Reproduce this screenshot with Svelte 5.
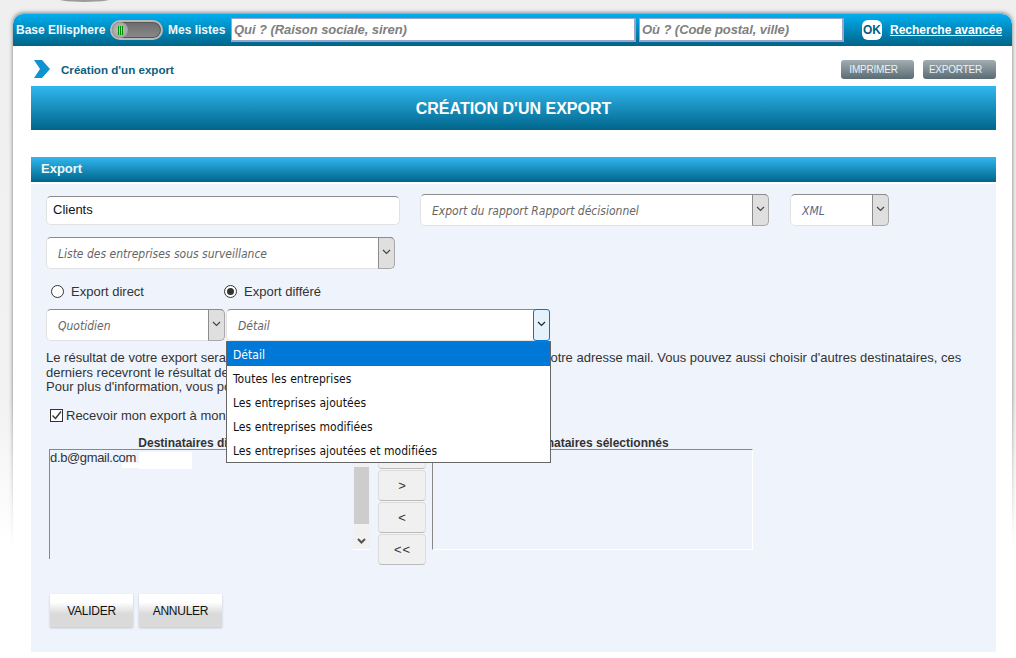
<script>
  const options = ['Détail', 'Toutes les entreprises', 'Les entreprises ajoutées', 'Les entreprises modifiées', 'Les entreprises ajoutées et modifiées'];
</script>

<div class="bg">
  <div class="arc"></div>
  <div class="shade"><div class="shade-box"></div></div>
  <div class="page">
    <header class="top">
      <span class="tl base">Base Ellisphere</span>
      <span class="toggle"><span class="knob"><i></i><i></i><i></i></span></span>
      <span class="tl mes">Mes listes</span>
      <div class="search qui">Qui ? (Raison sociale, siren)</div>
      <div class="search ou">Où ? (Code postal, ville)</div>
      <span class="ok">OK</span>
      <a class="adv" href="#top">Recherche avancée</a>
    </header>

    <div class="content">
      <div class="crumbs">
        <svg class="chev" width="18" height="18" viewBox="0 0 18 18"><path d="M1 0H9L17 9L9 18H1L7 9Z" fill="#0f93d0"/></svg>
        <span class="crumb">Création d'un export</span>
        <span class="spacer"></span>
        <span class="gbtn">IMPRIMER</span>
        <span class="gbtn">EXPORTER</span>
      </div>
      <h1 class="title">CRÉATION D'UN EXPORT</h1>
      <h2 class="section">Export</h2>
      <div class="panel">
        <div class="row r1">
          <div class="input">Clients</div>
          <div class="sel w349"><span class="val">Export du rapport Rapport décisionnel</span><span class="arrow"><svg width="9" height="6" viewBox="0 0 9 6"><path d="M1 1L4.500 4.500L8 1" fill="none" stroke="#444" stroke-width="1.200"/></svg></span></div>
          <div class="sel w99"><span class="val xml">XML</span><span class="arrow"><svg width="9" height="6" viewBox="0 0 9 6"><path d="M1 1L4.500 4.500L8 1" fill="none" stroke="#444" stroke-width="1.200"/></svg></span></div>
        </div>
        <div class="row r2">
          <div class="sel w349"><span class="val">Liste des entreprises sous surveillance</span><span class="arrow"><svg width="9" height="6" viewBox="0 0 9 6"><path d="M1 1L4.500 4.500L8 1" fill="none" stroke="#444" stroke-width="1.200"/></svg></span></div>
        </div>
        <div class="row r3">
          <span class="radio"></span><span class="rlabel first">Export direct</span>
          <span class="radio on"></span><span class="rlabel">Export différé</span>
        </div>
        <div class="row r4">
          <div class="sel w179"><span class="val">Quotidien</span><span class="arrow"><svg width="9" height="6" viewBox="0 0 9 6"><path d="M1 1L4.500 4.500L8 1" fill="none" stroke="#444" stroke-width="1.200"/></svg></span></div>
          <div class="sel w324 open">
            <span class="val">Détail</span><span class="arrow"><svg width="9" height="6" viewBox="0 0 9 6"><path d="M1 1L4.500 4.500L8 1" fill="none" stroke="#222" stroke-width="1.200"/></svg></span>
            <ul class="menu">
              {#each options as o, i}
                <li class:active={i === 0}>{o}</li>
              {/each}
            </ul>
          </div>
        </div>
        <p class="info">Le résultat de votre export sera envoyé selon la fréquence choisie automatiquement à votre adresse mail. Vous pouvez aussi choisir d'autres destinataires, ces<br>derniers recevront le résultat de votre export par mail à chaque nouvelle génération.<br>Pour plus d'information, vous pouvez consulter notre aide en ligne.</p>
        <div class="check">
          <span class="cb"><svg width="13" height="13" viewBox="0 0 13 13"><path d="M2.500 6.500L5.500 9.500L11 2.500" fill="none" stroke="#333" stroke-width="1.400"/></svg></span>
          <span>Recevoir mon export à mon adresse mail</span>
        </div>
        <div class="transfer">
          <div class="col">
            <div class="head lefthead">Destinataires disponibles</div>
            <div class="list left">
              <div class="items">
                <div class="mail"><span class="mask m1"></span><span class="mask m2"></span><span class="addr">d.b@gmail.com</span></div>
              </div>
              <div class="scroll">
                <span class="thumb"></span>
                <svg class="down" width="9" height="6" viewBox="0 0 9 6"><path d="M1 1L4.500 4.500L8 1" fill="none" stroke="#555" stroke-width="2"/></svg>
              </div>
            </div>
          </div>
          <div class="moves">
            <span class="mv">&gt;&gt;</span>
            <span class="mv">&gt;</span>
            <span class="mv">&lt;</span>
            <span class="mv">&lt;&lt;</span>
          </div>
          <div class="col">
            <div class="head">Destinataires sélectionnés</div>
            <div class="list right"></div>
          </div>
        </div>
        <div class="actions">
          <span class="act">VALIDER</span>
          <span class="act">ANNULER</span>
        </div>
      </div>
    </div>
  </div>
</div>

<style>
  :global(body) { margin: 0; background: #fff; }
  * { box-sizing: border-box; }
  .bg {
    position: relative;
    height: 658px;
    overflow: hidden;
    padding: 14px 4px 0 13px;
    background: linear-gradient(#efefef 0, #f2f2f2 400px, #fff 540px);
    font-family: "Liberation Sans", Arial, sans-serif;
  }
  .arc {
    position: absolute;
    top: -9px; left: 53px;
    width: 63px; height: 11px;
    border-radius: 50%;
    background: #9f9a9c;
  }
  .shade {
    position: absolute;
    top: 6px; left: 5px;
    width: 1015px; height: 560px;
    padding: 8px;
    -webkit-mask-image: linear-gradient(#000 70%, transparent 97%);
    mask-image: linear-gradient(#000 70%, transparent 97%);
  }
  .shade-box {
    height: 100%;
    border-radius: 10px 10px 0 0;
    box-shadow: 0 -1px 4px rgba(0,0,0,.5);
  }
  .page {
    position: relative;
    height: 644px;
    background: #fff;
    border-radius: 10px 10px 0 0;
  }
  .top {
    display: flex;
    align-items: center;
    height: 32px;
    border-radius: 10px 10px 0 0;
    background: linear-gradient(#00aeef, #006488);
    color: #fff;
    padding-left: 4px;
  }
  .tl { font-size: 12px; font-weight: bold; color: #f0f8fc; white-space: nowrap; }
  .base { width: 93px; margin-left: -1px; margin-right: 1px; }
  .toggle {
    width: 53px; height: 20px;
    border-radius: 10px;
    background: linear-gradient(#6c6c6c, #8a8a8a);
    border: 2px solid #b9b9b9;
    display: flex;
    align-items: center;
    box-shadow: 0 0 0 1px #555 inset;
  }
  .knob {
    width: 16px; height: 16px;
    border-radius: 50%;
    background: radial-gradient(#c8c8c8, #8f8f8f);
    display: flex;
    justify-content: center;
    align-items: center;
    gap: 1px;
  }
  .knob i { display: block; flex: none; width: 1px; height: 9px; background: #008c00; }
  .mes { margin-left: 5px; width: 63px; }
  .search {
    height: 24px;
    background: #fff;
    border: 1px solid #9aa5cc;
    border-width: 1px 2px 2px 1px;
    color: #808080;
    font-size: 13px;
    font-weight: bold;
    font-style: italic;
    letter-spacing: -.07px;
    line-height: 22px;
    padding-left: 2px;
    white-space: nowrap;
  }
  .qui { width: 405px; }
  .ou { width: 205px; margin-left: 3px; }
  .ok {
    width: 20px; height: 20px;
    margin-left: 18px;
    border-radius: 6px;
    background: #fff;
    color: #005f80;
    font-size: 12px;
    font-weight: bold;
    text-align: center;
    line-height: 20px;
  }
  .adv {
    margin-left: 8px;
    font-size: 12px;
    font-weight: bold;
    color: #fff;
    text-decoration: underline;
    white-space: nowrap;
  }
  .content { padding: 0 16px 0 18px; }
  .crumbs { display: flex; align-items: center; height: 40px; padding-top: 6px; }
  .chev { margin-left: 2px; }
  .crumb { margin-left: 10px; padding-top: 1px; font-size: 11.600px; font-weight: bold; color: #0a5f80; }
  .spacer { flex: 1; }
  .gbtn {
    width: 73px; height: 19px;
    margin-left: 9px;
    padding-right: 8px;
    border-radius: 3px;
    background: linear-gradient(#a1aeb3, #5b6b73);
    color: #edf2f4;
    font-size: 10px;
    letter-spacing: -.2px;
    line-height: 20px;
    text-align: center;
  }
  .title {
    margin: 0;
    height: 44px;
    background: linear-gradient(#31b7ee, #00658a);
    color: #fff;
    font-size: 16px;
    font-weight: bold;
    text-align: center;
    line-height: 46px;
  }
  .section {
    margin: 27px 0 2px;
    height: 25px;
    padding-left: 10px;
    background: linear-gradient(#31b7ee, #00658a);
    color: #eef8fc;
    font-size: 13px;
    font-weight: bold;
    line-height: 24px;
  }
  .panel { height: 468px; background: #eff3fc; padding: 10px 0 0 15px; }
  .row { display: flex; align-items: flex-start; }
  .input {
    width: 354px; height: 29px;
    margin: 2px 20px 0 0;
    background: #fff;
    border: 1px solid #e2e2e2;
    border-top-color: #8c8c8c;
    border-radius: 5px;
    padding-left: 6px;
    color: #111;
    font-size: 13px;
    line-height: 26px;
  }
  .sel {
    position: relative;
    display: flex;
    height: 32px;
    background: #fff;
    border: 1px solid #e2e2e2;
    border-top-color: #8c8c8c;
    border-radius: 5px;
    font-family: "DejaVu Sans", sans-serif;
    font-stretch: condensed;
    font-size: 12px;
    font-style: italic;
    color: #666;
  }
  .val { flex: 1; padding-left: 11px; line-height: 33px; white-space: nowrap; }
  .xml { color: #5a6a88; }
  .arrow {
    width: 17px;
    margin: -1px -1px -1px 0;
    background: #dfdfdf;
    border: 1px solid #a8a8a8;
    border-left-color: #8c8c8c;
    border-top-color: #8c8c8c;
    border-radius: 0 5px 5px 0;
    display: flex;
    align-items: center;
    justify-content: center;
    padding-bottom: 2px;
  }
  .w349 { width: 349px; margin-right: 21px; }
  .w99 { width: 99px; }
  .w179 { width: 179px; margin-right: 1px; }
  .w324 { width: 324px; }
  .open .arrow { background: #e5f1fb; border-color: #0078d7; border-radius: 3px; }
  .menu {
    position: absolute;
    z-index: 2;
    top: 31px; left: -1px;
    width: 325px;
    margin: 0;
    padding: 0;
    list-style: none;
    background: #fff;
    border: 1px solid #666;
    font-family: "DejaVu Sans", sans-serif;
    font-stretch: condensed;
    font-size: 12px;
    font-style: normal;
    color: #111;
  }
  .menu li { height: 24px; padding-left: 6px; line-height: 26px; letter-spacing: .05px; white-space: nowrap; }
  .menu li.active { background: #0078d7; color: #fff; }
  .r2 { margin-top: 11px; }
  .r3 { margin-top: 13px; height: 18px; align-items: center; font-size: 13px; color: #333; }
  .radio {
    width: 13px; height: 13px;
    margin-left: 5px;
    border: 1px solid #333;
    border-radius: 50%;
    background: #fff;
    display: flex;
    align-items: center;
    justify-content: center;
  }
  .radio.on::after { content: ""; width: 7px; height: 7px; border-radius: 50%; background: #333; }
  .rlabel { margin-left: 7px; }
  .first { width: 148px; }
  .r4 { margin-top: 9px; }
  .info {
    margin: 10px 0 0;
    width: 930px;
    font-size: 13px;
    line-height: 14.500px;
    color: #333;
    white-space: nowrap;
  }
  .check {
    display: flex;
    align-items: center;
    margin: 13px 0 0 4px;
    height: 15px;
    font-size: 13px;
    color: #333;
  }
  .cb {
    width: 13px; height: 13px;
    margin-right: 3px;
    border: 1px solid #333;
    background: #fff;
    display: flex;
  }
  .cb svg { margin: -1px; }
  .transfer { display: flex; align-items: flex-start; margin: 13px 0 0 3px; }
  .col { width: 321px; }
  .head { height: 13px; padding-left: 1px; font-size: 12px; font-weight: bold; color: #333; text-align: center; line-height: 14px; white-space: nowrap; }
  .lefthead { padding-left: 3px; }
  .list { border-top: 1px solid #888; border-left: 1px solid #888; }
  .left { height: 110px; display: flex; align-items: flex-start; }
  .items { flex: 1; }
  .mail { position: relative; font-size: 13px; letter-spacing: -.35px; color: #333; line-height: 15px; }
  .addr { position: relative; }
  .mask { position: absolute; background: #fff; }
  .m1 { top: 2px; left: 89px; width: 53px; height: 17px; }
  .m2 { top: 13px; left: 72px; width: 17px; height: 5px; }
  .scroll {
    position: relative;
    width: 17px; height: 100px;
    background: #f1f1f1;
    border-bottom: 1px solid #fff;
  }
  .thumb { position: absolute; top: 17px; left: 1px; width: 15px; height: 57px; background: #cdcdcd; }
  .down { position: absolute; top: 88px; left: 4px; }
  .moves { width: 48px; margin: 2px 6px 0 8px; display: flex; flex-direction: column; gap: 1px; }
  .mv {
    height: 31px;
    padding-left: 1px;
    background: #f0f0f0;
    border: 1px solid #dcdcdc;
    border-bottom-color: #bbb;
    border-radius: 4px;
    color: #333;
    font-size: 13px;
    line-height: 29px;
    text-align: center;
    letter-spacing: 1px;
  }
  .right { height: 101px; border-right: 1px solid #fff; border-bottom: 1px solid #fff; }
  .actions { display: flex; gap: 6px; margin: 29px 0 0 4px; }
  .act {
    width: 83px; height: 33px;
    background: linear-gradient(#fff 0, #fff 25%, #dadada 60%, #dadada 100%);
    box-shadow: 0 1px 2px rgba(80,80,110,.3);
    color: #111;
    font-size: 12px;
    letter-spacing: -.25px;
    line-height: 35px;
    text-align: center;
  }
</style>
